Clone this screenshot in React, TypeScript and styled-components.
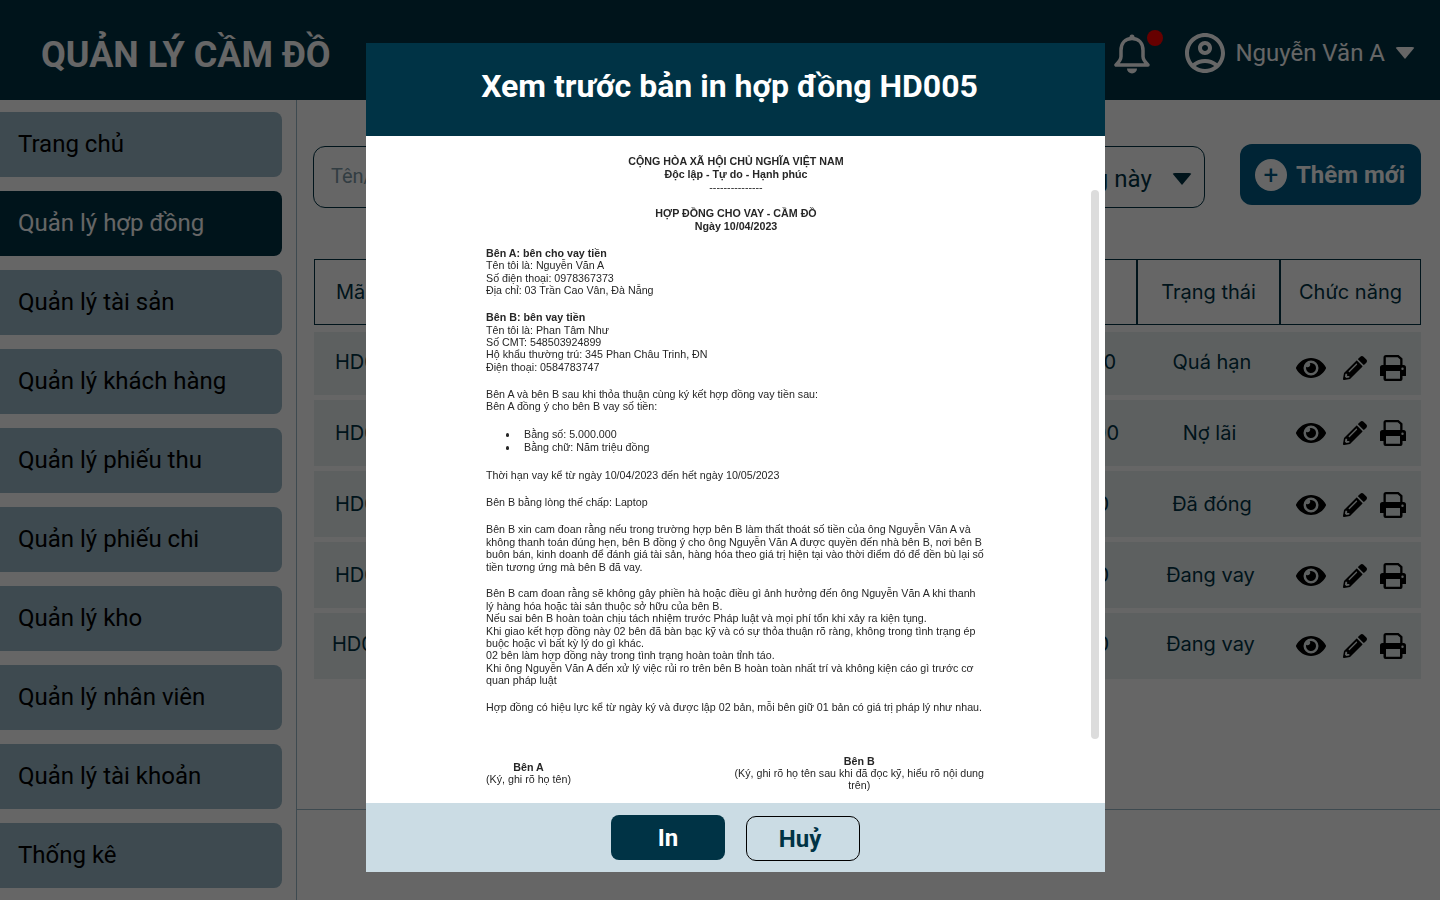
import React from "react"
import styled, { createGlobalStyle } from "styled-components"
import { FaEye, FaPencilAlt } from "react-icons/fa"
import { MdOutlineAccountCircle } from "react-icons/md"

const GlobalStyle = createGlobalStyle`
  html, body {
    margin: 0;
    padding: 0;
    height: 100%;
    overflow: hidden;
    background: #fff;
    font-family: Roboto, "Liberation Sans", sans-serif;
  }
  * { box-sizing: border-box; }
`

const navItems = [
  "Trang chủ",
  "Quản lý hợp đồng",
  "Quản lý tài sản",
  "Quản lý khách hàng",
  "Quản lý phiếu thu",
  "Quản lý phiếu chi",
  "Quản lý kho",
  "Quản lý nhân viên",
  "Quản lý tài khoản",
  "Thống kê",
]

const rows = [
  { id: "HD001", amount: "5.000.000", status: "Quá hạn", height: 63, idPad: 21, amountPad: 21, statusPad: 0, textLift: 4, iconDrop: 8 },
  { id: "HD002", amount: "5.000.000", status: "Nợ lãi", height: 66, idPad: 21, amountPad: 18, statusPad: 5, textLift: 0, iconDrop: 0 },
  { id: "HD003", amount: "5.000.000", status: "Đã đóng", height: 66, idPad: 21, amountPad: 28, statusPad: 0, textLift: 0, iconDrop: 2 },
  { id: "HD004", amount: "5.000.000", status: "Đang vay", height: 66, idPad: 21, amountPad: 28, statusPad: 3, textLift: 0, iconDrop: 2 },
  { id: "HD005", amount: "5.000.000", status: "Đang vay", height: 66, idPad: 18, amountPad: 28, statusPad: 3, textLift: 4, iconDrop: 0 },
]

function BellIcon() {
  return (
    <svg width="36" height="40" viewBox="0 0 36 40" fill="none">
      <circle cx="18" cy="3" r="2.5" fill="currentColor" />
      <path
        d="M18 4.5c-7 0-11 5-11 12v6c0 3-2 5.5-5 8.5h32c-3-3-5-5.500-5-8.500v-6c0-7-4-12-11-12z"
        stroke="currentColor"
        strokeWidth="3.5"
        strokeLinejoin="round"
      />
      <path d="M13 34.500h10a5 5 0 0 1-10 0z" fill="currentColor" />
    </svg>
  )
}

function PrintIcon() {
  return (
    <svg width="26" height="26" viewBox="0 0 26 26" fill="currentColor">
      <path d="M3.5 10V2.5A2.5 2.5 0 0 1 6 0h12.500l4 3.500V10h-2.300V4.500L17.700 2.300H5.800V10z" />
      <path
        fillRule="evenodd"
        d="M2.500 10h21a2.500 2.500 0 0 1 2.500 2.500V21h-3.500v3a2 2 0 0 1-2 2h-15a2 2 0 0 1-2-2v-3H0v-8.500A2.500 2.500 0 0 1 2.500 10zM6 16v7.700h14V16zM22.500 12.500a1.200 1.200 0 1 0 0 2.400 1.200 1.200 0 0 0 0-2.400z"
      />
    </svg>
  )
}

export default function App() {
  return (
    <Page>
      <GlobalStyle />
      <Header>
        <Brand>QUẢN LÝ CẦM ĐỒ</Brand>
        <UserArea>
          <BellWrap>
            <BellIcon />
            <BellDot />
          </BellWrap>
          <MdOutlineAccountCircle size={48} />
          <UserName>Nguyễn Văn A</UserName>
          <Caret $color="#fff" />
        </UserArea>
      </Header>

      <Body>
        <Sidebar>
          {navItems.map((item, i) => (
            <NavItem key={item} $active={i === 1}>{item}</NavItem>
          ))}
        </Sidebar>

        <Main>
          <Toolbar>
            <SearchBox>Tên/Mã hợp đồng</SearchBox>
            <FilterBox>
              Tháng này
              <Caret $color="#003345" />
            </FilterBox>
            <AddButton>
              <PlusCircle>+</PlusCircle>
              Thêm mới
            </AddButton>
          </Toolbar>

          <TableHead>
            <HeadCell>Mã hợp đồng</HeadCell>
            <HeadCell>Trạng thái</HeadCell>
            <HeadCell>Chức năng</HeadCell>
          </TableHead>

          <RowList>
            {rows.map((row) => (
              <Row key={row.id} $height={row.height}>
                <IdCell $pad={row.idPad} $lift={row.textLift}>{row.id}</IdCell>
                <AmountCell $pad={row.amountPad} $lift={row.textLift}>{row.amount}</AmountCell>
                <StatusCell $pad={row.statusPad} $lift={row.textLift}>{row.status}</StatusCell>
                <Actions $drop={row.iconDrop}>
                  <FaEye size={30} />
                  <FaPencilAlt size={24} />
                  <PrintIcon />
                </Actions>
              </Row>
            ))}
          </RowList>

          <FooterLine />
        </Main>
      </Body>

      <Overlay>
        <Modal>
          <ModalTitle>Xem trước bản in hợp đồng HD005</ModalTitle>
          <ModalBody>
            <Doc>
              <CenterBlock $gap={13}>
                <strong>CỘNG HÒA XÃ HỘI CHỦ NGHĨA VIỆT NAM</strong><br />
                <strong>Độc lập - Tự do - Hạnh phúc</strong><br />
                ---------------
              </CenterBlock>
              <CenterBlock $gap={14}>
                <strong>HỢP ĐỒNG CHO VAY - CẦM ĐỒ</strong><br />
                <strong>Ngày 10/04/2023</strong>
              </CenterBlock>
              <Para>
                <strong>Bên A: bên cho vay tiền</strong><br />
                Tên tôi là: Nguyễn Văn A<br />
                Số điện thoại: 0978367373<br />
                Địa chỉ: 03 Trần Cao Vân, Đà Nẵng
              </Para>
              <Para>
                <strong>Bên B: bên vay tiền</strong><br />
                Tên tôi là: Phan Tâm Như<br />
                Số CMT: 548503924899<br />
                Hộ khẩu thường trú: 345 Phan Châu Trinh, ĐN<br />
                Điện thoại: 0584783747
              </Para>
              <Para>
                Bên A và bên B sau khi thỏa thuận cùng ký kết hợp đồng vay tiền sau:<br />
                Bên A đồng ý cho bên B vay số tiền:
              </Para>
              <DocList>
                <li>Bằng số: 5.000.000</li>
                <li>Bằng chữ: Năm triệu đồng</li>
              </DocList>
              <Para>Thời hạn vay kể từ ngày 10/04/2023 đến hết ngày 10/05/2023</Para>
              <Para>Bên B bằng lòng thế chấp: Laptop</Para>
              <Para>
                Bên B xin cam đoan rằng nếu trong trường hợp bên B làm thất thoát số tiền của ông Nguyễn Văn A và<br />
                không thanh toán đúng hẹn, bên B đồng ý cho ông Nguyễn Văn A được quyền đến nhà bên B, nơi bên B<br />
                buôn bán, kinh doanh để đánh giá tài sản, hàng hóa theo giá trị hiện tại vào thời điểm đó để đền bù lại số<br />
                tiền tương ứng mà bên B đã vay.
              </Para>
              <Para>
                Bên B cam đoan rằng sẽ không gây phiền hà hoặc điều gì ảnh hưởng đến ông Nguyễn Văn A khi thanh<br />
                lý hàng hóa hoặc tài sản thuộc sở hữu của bên B.<br />
                Nếu sai bên B hoàn toàn chịu tách nhiệm trước Pháp luật và mọi phí tổn khi xảy ra kiện tụng.<br />
                Khi giao kết hợp đồng này 02 bên đã bàn bạc kỹ và có sự thỏa thuận rõ ràng, không trong tình trạng ép<br />
                buộc hoặc vì bất kỳ lý do gì khác.<br />
                02 bên làm hợp đồng này trong tình trạng hoàn toàn tỉnh táo.<br />
                Khi ông Nguyễn Văn A đến xử lý việc rủi ro trên bên B hoàn toàn nhất trí và không kiện cáo gì trước cơ<br />
                quan pháp luật
              </Para>
              <Para>Hợp đồng có hiệu lực kể từ ngày ký và được lập 02 bản, mỗi bên giữ 01 bản có giá trị pháp lý như nhau.</Para>
              <Signatures>
                <SignBlock>
                  <SignName>Bên A</SignName>
                  (Ký, ghi rõ họ tên)
                </SignBlock>
                <SignBlock>
                  <SignName>Bên B</SignName>
                  (Ký, ghi rõ họ tên sau khi đã đọc kỹ, hiểu rõ nội dung<br />
                  trên)
                </SignBlock>
              </Signatures>
            </Doc>
            <ScrollThumb />
          </ModalBody>
          <ModalFooter>
            <PrimaryButton>In</PrimaryButton>
            <GhostButton>Huỷ</GhostButton>
          </ModalFooter>
        </Modal>
      </Overlay>
    </Page>
  )
}

const Page = styled.div`
  position: relative;
  width: 1440px;
  height: 900px;
  overflow: hidden;
  background: #fff;
`

const Header = styled.header`
  height: 100px;
  background: #003345;
  color: #fff;
  display: flex;
  align-items: center;
  justify-content: space-between;
  padding: 0 25px 0 41px;
`

const Brand = styled.h1`
  margin: 0;
  font-size: 36px;
  font-weight: 700;
  line-height: 1;
  padding-top: 9px;
`

const UserArea = styled.div`
  display: flex;
  align-items: center;
  padding-top: 6px;
`

const BellWrap = styled.div`
  position: relative;
  display: flex;
  margin: 2px 31px 0 0;
`

const BellDot = styled.span`
  position: absolute;
  top: -4px;
  right: -13px;
  width: 16px;
  height: 16px;
  border-radius: 50%;
  background: #ff0000;
`

const UserName = styled.span`
  font-size: 24px;
  margin: 0 10px 0 6px;
`

const Caret = styled.span<{ $color: string }>`
  width: 0;
  height: 0;
  border-left: 10px solid transparent;
  border-right: 10px solid transparent;
  border-top: 12px solid ${(p) => p.$color};
  border-radius: 3px;
`

const Body = styled.div`
  display: flex;
  height: 800px;
`

const Sidebar = styled.nav`
  width: 297px;
  flex: none;
  border-right: 1px solid #9bb9c8;
  padding: 12px 14px 0 0;
  display: flex;
  flex-direction: column;
  gap: 14px;
`

const NavItem = styled.div<{ $active?: boolean }>`
  height: 65px;
  flex: none;
  display: flex;
  align-items: center;
  padding: 0 0 1px 18px;
  border-radius: 0 8px 8px 0;
  font-size: 24px;
  background: ${(p) => (p.$active ? "#003345" : "#9bb9c8")};
  color: ${(p) => (p.$active ? "#fff" : "#000")};
`

const Main = styled.main`
  flex: 1;
  padding: 44px 19px 0 16px;
  display: flex;
  flex-direction: column;
`

const Toolbar = styled.div`
  display: flex;
  align-items: flex-start;
  height: 115px;
`

const SearchBox = styled.div`
  width: 400px;
  height: 62px;
  margin-top: 2px;
  border: 1px solid #003345;
  border-radius: 12px;
  padding: 0 17px 2px;
  display: flex;
  align-items: center;
  font-size: 20px;
  color: #7d98a6;
`

const FilterBox = styled.div`
  width: 200px;
  height: 62px;
  margin: 2px 35px 0 auto;
  border: 1px solid #003345;
  border-radius: 12px;
  padding: 3px 12px 0 35px;
  display: flex;
  align-items: center;
  justify-content: space-between;
  font-size: 24px;
  color: #003345;
`

const AddButton = styled.div`
  width: 181px;
  height: 61px;
  border-radius: 12px;
  background: #005b85;
  color: #fff;
  display: flex;
  align-items: center;
  gap: 9px;
  padding-left: 15px;
  font-size: 24px;
  font-weight: 700;
`

const PlusCircle = styled.span`
  width: 32px;
  height: 32px;
  border-radius: 50%;
  background: #fff;
  color: #005b85;
  display: flex;
  align-items: center;
  justify-content: center;
  font-size: 26px;
  font-weight: 400;
  line-height: 1;
`

const TableHead = styled.div`
  height: 66px;
  display: grid;
  grid-template-columns: 1fr 143px 141px;
  border: 1px solid #003345;
  margin-left: 1px;
`

const HeadCell = styled.div`
  display: flex;
  align-items: center;
  justify-content: center;
  font-family: Inter, Roboto, sans-serif;
  font-size: 20px;
  color: #003345;
  border-left: 2px solid #003345;

  &:first-child {
    border-left: none;
    justify-content: flex-start;
    padding-left: 21px;
  }
`

const RowList = styled.div`
  margin-top: 7px;
  display: flex;
  flex-direction: column;
  gap: 5px;
  margin-left: 1px;
`

const Row = styled.div<{ $height: number }>`
  height: ${(p) => p.$height}px;
  background: #e8f0f0;
  display: grid;
  grid-template-columns: 1fr 1fr 150px 134px;
  align-items: center;
  font-family: Inter, Roboto, sans-serif;
  font-size: 20px;
  color: #003345;
`

const IdCell = styled.div<{ $pad: number; $lift: number }>`
  padding: 0 0 ${(p) => p.$lift}px ${(p) => p.$pad}px;
`

const AmountCell = styled.div<{ $pad: number; $lift: number }>`
  text-align: right;
  padding: 0 ${(p) => p.$pad}px ${(p) => p.$lift}px 0;
`

const StatusCell = styled.div<{ $pad: number; $lift: number }>`
  text-align: center;
  padding: 0 ${(p) => p.$pad}px ${(p) => p.$lift}px 0;
`

const Actions = styled.div<{ $drop: number }>`
  display: flex;
  align-items: center;
  padding: ${(p) => p.$drop}px 0 0 9px;
  color: #000;

  svg:nth-child(1) { margin-right: 17px; }
  svg:nth-child(2) { margin-right: 13px; }
`

const FooterLine = styled.div`
  margin: 130px -19px 0 -16px;
  height: 1px;
  background: #9bb9c8;
`

const Overlay = styled.div`
  position: absolute;
  inset: 0;
  background: rgba(0, 0, 0, 0.6);
  display: flex;
  justify-content: center;
  align-items: flex-start;
  padding: 43px 0 0 31px;
`

const Modal = styled.div`
  width: 739px;
  height: 829px;
  background: #fff;
  display: flex;
  flex-direction: column;
`

const ModalTitle = styled.div`
  height: 93px;
  flex: none;
  background: #003345;
  color: #fff;
  display: flex;
  align-items: center;
  justify-content: center;
  padding: 0 12px 8px 0;
  font-size: 32px;
  font-weight: 700;
`

const ModalBody = styled.div`
  position: relative;
  flex: 1;
  overflow: hidden;
  padding: 19px 0 0 120px;
`

const Doc = styled.div`
  width: 500px;
  font-family: "Liberation Sans", Arial, sans-serif;
  font-size: 10.7px;
  line-height: 12.4px;
  color: #262626;
  white-space: nowrap;
  filter: blur(0.4px);
`

const CenterBlock = styled.p<{ $gap: number }>`
  margin: 0 0 ${(p) => p.$gap}px;
  line-height: 13px;
  text-align: center;
`

const Para = styled.p`
  margin: 0 0 14.5px;
`

const DocList = styled.ul`
  margin: 0 0 15px;
  padding: 1.5px 0 0 19.5px;
  list-style: none;
  line-height: 13px;

  li {
    display: flex;
    align-items: center;
  }

  li::before {
    content: "";
    width: 3.5px;
    height: 3.5px;
    margin-right: 15px;
    border-radius: 50%;
    background: #262626;
  }
`

const Signatures = styled.div`
  display: flex;
  justify-content: space-between;
  align-items: center;
  margin-top: 41px;
  padding-right: 2px;
`

const SignBlock = styled.div`
  text-align: center;
`

const SignName = styled.strong`
  display: block;
`

const ScrollThumb = styled.div`
  position: absolute;
  top: 54px;
  right: 6px;
  width: 8px;
  height: 549px;
  border-radius: 4px;
  background: #dcdcdc;
`

const ModalFooter = styled.div`
  height: 69px;
  flex: none;
  background: #cbdce4;
  display: flex;
  align-items: center;
  gap: 21px;
  padding-left: 245px;
`

const PrimaryButton = styled.div`
  width: 114px;
  height: 45px;
  border-radius: 8px;
  background: #003345;
  color: #fff;
  display: flex;
  align-items: center;
  justify-content: center;
  padding-top: 1px;
  font-size: 24px;
  font-weight: 700;
`

const GhostButton = styled.div`
  width: 114px;
  height: 45px;
  margin-top: 2px;
  border: 1px solid #000;
  border-radius: 10px;
  color: #003345;
  display: flex;
  align-items: center;
  justify-content: center;
  padding-right: 6px;
  font-size: 24px;
  font-weight: 700;
`
